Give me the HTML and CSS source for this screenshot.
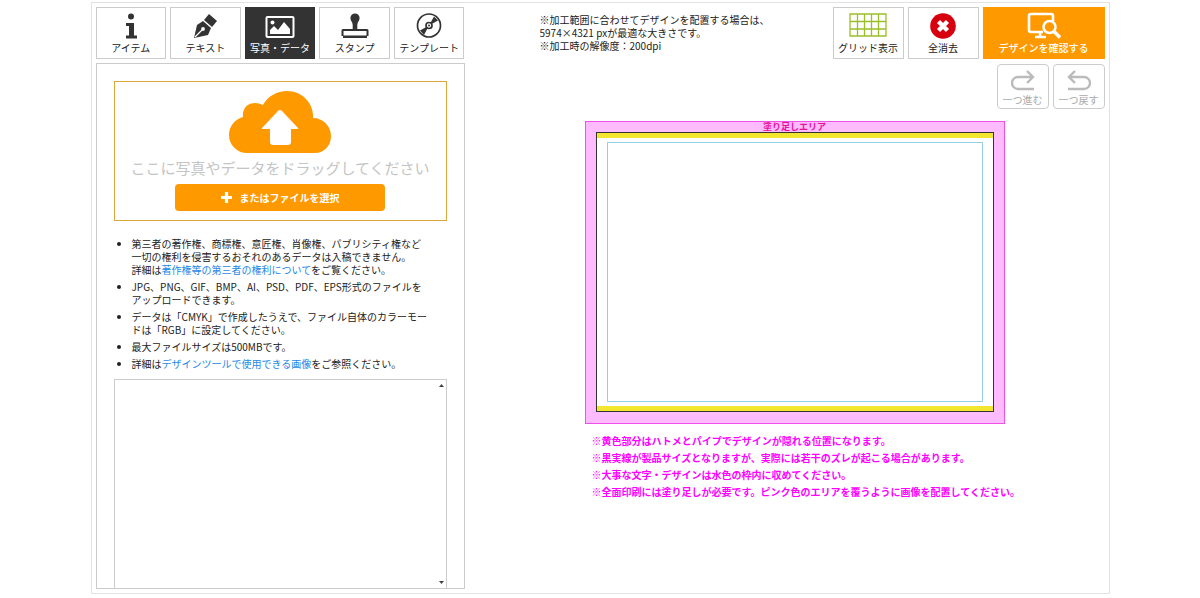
FILE: index.html
```
<!DOCTYPE html>
<html lang="ja">
<head>
<meta charset="utf-8">
<meta name="viewport" content="width=device-width, initial-scale=1">
<title>デザインツール</title>
<link rel="stylesheet" href="styles.css">
</head>
<body>
<div class="frame">
  <section class="sidebar">
    <nav class="tabs">
      <button class="tile" type="button">
        <svg class="icon" width="28" height="28" viewBox="0 0 28 28"><circle cx="14" cy="4.500" r="3" fill="#333"/><path d="M9 11h8v12.500h3v3H9v-3h3V14H9z" fill="#333"/></svg>
        <span>アイテム</span>
      </button>
      <button class="tile" type="button">
        <svg class="icon" width="28" height="28" viewBox="0 0 28 28"><path d="M18 2l8 7-5 6-8-7z" fill="#333"/><path d="M12 9l8 7-3 7L3 26 6 13z" fill="#333"/><path d="M4 25l7-7" stroke="#fff" stroke-width="1.3"/><circle cx="12" cy="17" r="1.9" fill="#fff"/></svg>
        <span>テキスト</span>
      </button>
      <button class="tile tile-active" type="button" aria-pressed="true">
        <svg class="icon" width="30" height="28" viewBox="0 0 30 28"><rect x="1.5" y="5" width="27" height="20" rx="1" fill="none" stroke="#fff" stroke-width="2"/><circle cx="7.500" cy="10.500" r="2" fill="#fff"/><path d="M5 22v-4l4-4 4 4 6-8 6 7v5z" fill="#fff"/></svg>
        <span>写真・データ</span>
      </button>
      <button class="tile" type="button">
        <svg class="icon" width="28" height="28" viewBox="0 0 28 28"><path d="M14 1.500a4.600 4.600 0 0 1 4.600 4.600c0 3-2.300 4-2.300 7V17h9.700q1.500 0 1.500 1.500V24H26v2H2v-2H.5v-5.500Q.5 17 2 17h9.700v-3.900c0-3-2.300-4-2.300-7A4.600 4.600 0 0 1 14 1.500z" fill="#333"/><path d="M2.500 19h23v4.500h-23z" fill="#fff"/></svg>
        <span>スタンプ</span>
      </button>
      <button class="tile" type="button">
        <svg class="icon" width="28" height="28" viewBox="0 0 28 28"><circle cx="14" cy="13.500" r="11.500" fill="none" stroke="#333" stroke-width="1.700"/><path d="M14 13.500L19 4.500 23 8.500zM14 13.500L5 18.500l4 4.500z" fill="#333"/><circle cx="14" cy="13.500" r="3" fill="#fff" stroke="#333" stroke-width="1.700"/><circle cx="14" cy="13.500" r="1" fill="#333"/></svg>
        <span>テンプレート</span>
      </button>
    </nav>

    <div class="panel">
      <div class="dropzone">
        <svg width="102" height="62" viewBox="0 0 102 62"><path d="M18 62A18 18 0 0 1 0 44C0 35 6 28 14 26 13 17 19 12 26 12q4 0 8 2C39 5 48 0 58 0c16 0 27 13 26 27 10 0 18 8 18 18s-7 17-16 17z" fill="#f90"/><path d="M51 19q1 0 2 1l16 17q1 1-1 1h-6v13q0 3-3 3H44q-3 0-3-3V38h-7q-2 0-1-1l16-17q1-1 2-1z" fill="#fff"/></svg>
        <p class="drop-text">ここに写真やデータをドラッグしてください</p>
        <button class="choose" type="button">
          <svg width="11" height="11" viewBox="0 0 11 11"><path d="M5.500 0v11M0 5.500h11" stroke="#fff" stroke-width="3.200"/></svg>
          <span>またはファイルを選択</span>
        </button>
      </div>
      <ul class="guide">
        <li>第三者の著作権、商標権、意匠権、肖像権、パブリシティ権など<br>一切の権利を侵害するおそれのあるデータは入稿できません。<br>詳細は<a href="#rights">著作権等の第三者の権利について</a>をご覧ください。</li>
        <li>JPG、PNG、GIF、BMP、AI、PSD、PDF、EPS形式のファイルを<br>アップロードできます。</li>
        <li>データは「CMYK」で作成したうえで、ファイル自体のカラーモー<br>ドは「RGB」に設定してください。</li>
        <li>最大ファイルサイズは500MBです。</li>
        <li>詳細は<a href="#images">デザインツールで使用できる画像</a>をご参照ください。</li>
      </ul>
      <div class="filelist">
        <svg width="5" height="3" viewBox="0 0 5 3"><path d="M0 3L2.500 0 5 3z" fill="#444"/></svg>
        <svg width="5" height="3" viewBox="0 0 5 3"><path d="M0 0h5L2.500 3z" fill="#444"/></svg>
      </div>
    </div>
  </section>

  <main class="workspace">
    <header class="toolbar">
      <p class="size-note">※加工範囲に合わせてデザインを配置する場合は、<br>5974×4321 pxが最適な大きさです。<br>※加工時の解像度：200dpi</p>
      <div class="actions">
        <button class="tile" type="button">
          <svg class="icon" width="38" height="28" viewBox="0 0 38 28"><path d="M1 2h36v22H1zM1 9.500h36M1 17h36M8.500 2v22M15.500 2v22M22.500 2v22M29.500 2v22" fill="none" stroke="#9abf27" stroke-width="1.300"/></svg>
          <span>グリッド表示</span>
        </button>
        <button class="tile" type="button">
          <svg class="icon" width="28" height="28" viewBox="0 0 28 28"><circle cx="14" cy="14" r="12.800" fill="#d7000f"/><path d="M9.500 9.500l9 9M18.500 9.500l-9 9" stroke="#fff" stroke-width="4.400"/></svg>
          <span>全消去</span>
        </button>
        <button class="tile confirm" type="button">
          <svg class="icon" width="34" height="28" viewBox="0 0 34 28"><path d="M16 20H4q-2 0-2-2V4q0-2 2-2h20q2 0 2 2v5M13 20v5M8 25h11" fill="none" stroke="#fff" stroke-width="2.600"/><circle cx="22.500" cy="15" r="6" fill="#f90" stroke="#fff" stroke-width="2.500"/><path d="M27 19.500l6 6" stroke="#fff" stroke-width="3.600"/></svg>
          <span>デザインを確認する</span>
        </button>
      </div>
    </header>
    <div class="history">
      <button class="step" type="button">
        <svg width="24" height="22" viewBox="0 0 24 22"><path d="M23 19H7A6 6 0 0 1 7 7h15M16 1l6 6-6 6" fill="none" stroke="#bbb" stroke-width="2.400"/></svg>
        <span>一つ進む</span>
      </button>
      <button class="step" type="button">
        <svg width="24" height="22" viewBox="0 0 24 22"><path d="M1 19h16A6 6 0 0 0 17 7H2M8 1L2 7l6 6" fill="none" stroke="#bbb" stroke-width="2.400"/></svg>
        <span>一つ戻す</span>
      </button>
    </div>
    <div class="stage">
      <div class="bleed">
        <span class="bleed-label">塗り足しエリア</span>
        <div class="product"><div class="safe"></div></div>
      </div>
      <div class="cautions">
        <p>※黄色部分はハトメとパイプでデザインが隠れる位置になります。</p>
        <p>※黒実線が製品サイズとなりますが、実際には若干のズレが起こる場合があります。</p>
        <p>※大事な文字・デザインは水色の枠内に収めてください。</p>
        <p>※全面印刷には塗り足しが必要です。ピンク色のエリアを覆うように画像を配置してください。</p>
      </div>
    </div>
  </main>
</div>
</body>
</html>
```
FILE: styles.css
```
* {
  box-sizing: border-box;
}

body {
  margin: 0;
  padding: 2px 16px 4px;
  background: #fff;
  color: #222;
  font-family: "Noto Sans CJK JP", "Noto Sans", sans-serif;
  font-size: 10px;
  line-height: 13px;
}

p,
ul {
  margin: 0;
}

button {
  padding: 0;
  color: inherit;
  font: inherit;
  cursor: pointer;
}

svg {
  display: block;
}

.frame {
  display: grid;
  grid-template-columns: minmax(0, 369fr) minmax(0, 640fr);
  max-width: 1019px;
  min-height: calc(100vh - 6px);
  margin: 0 auto;
  padding: 4px;
  border: 1px solid #e2e2e2;
}

.sidebar {
  display: flex;
  flex-direction: column;
  gap: 4px;
}

.tabs {
  display: grid;
  grid-template-columns: repeat(5, 1fr);
  gap: 4px;
}

.tile {
  display: flex;
  flex-direction: column;
  align-items: center;
  justify-content: space-between;
  height: 52px;
  padding: 4px 0;
  border: 1px solid #ccc;
  background: #fff;
  white-space: nowrap;
}

.tile-active {
  border-color: #333;
  background: #333;
  color: #fff;
}

.panel {
  display: flex;
  flex: 1;
  flex-direction: column;
  padding: 17px 17px 0;
  border: 1px solid #ccc;
}

.dropzone {
  display: flex;
  flex-direction: column;
  align-items: center;
  padding: 9px 0;
  border: 1px solid #dba63a;
}

.drop-text {
  padding: 4px 0 6px;
  color: #c4c4c4;
  font-size: 15px;
  line-height: 21px;
}

.choose {
  display: flex;
  align-items: center;
  justify-content: center;
  gap: 8px;
  width: 210px;
  height: 27px;
  border: 0;
  border-radius: 4px;
  background: #f90;
  color: #fff;
  font-weight: bold;
}

.guide {
  display: grid;
  gap: 4px;
  padding: 16px 0 9px 18px;
  white-space: nowrap;
}

.guide a {
  color: #1e88e5;
  text-decoration: none;
}

.filelist {
  display: flex;
  flex: 1;
  flex-direction: column;
  align-items: flex-end;
  justify-content: space-between;
  padding: 4px 2px;
  border: 1px solid #ccc;
  border-bottom: 0;
}

.workspace {
  display: flex;
  flex-direction: column;
}

.toolbar {
  display: flex;
  justify-content: space-between;
}

.size-note {
  padding: 6px 0 0 75px;
  white-space: nowrap;
}

.actions {
  display: flex;
  gap: 4px;
}

.actions .tile {
  width: 71px;
}

.actions .confirm {
  width: 122px;
  border-color: #f90;
  background: #f90;
  color: #fff;
  font-weight: 500;
}

.history {
  display: flex;
  justify-content: flex-end;
  gap: 4px;
  padding-top: 5px;
}

.step {
  display: flex;
  flex-direction: column;
  align-items: center;
  justify-content: space-between;
  width: 52px;
  height: 45px;
  padding: 5px 0 2px;
  border: 1px solid #ccc;
  border-radius: 4px;
  background: #fff;
  color: #aaa;
}

.stage {
  width: 420px;
  margin: 12px 100px 0 auto;
}

.bleed {
  display: flex;
  flex-direction: column;
  padding: 0 10px 11px;
  border: 1px solid #f050e8;
  background: #fbf;
}

.bleed-label {
  color: #e8109a;
  font-size: 9px;
  font-weight: bold;
  line-height: 10px;
  text-align: center;
}

.product {
  padding: 4px 10px;
  border: 1px solid #333;
  background: linear-gradient(#f2e62e, #f2e62e) top / 100% 5px no-repeat, linear-gradient(#f2e62e, #f2e62e) bottom / 100% 5px no-repeat, #fff;
}

.safe {
  height: 260px;
  margin: 5px 0;
  border: 1px solid #93cfdf;
}

.cautions {
  padding: 8px 0 0 7px;
  color: #f0f;
  font-weight: bold;
  line-height: 17px;
  white-space: nowrap;
}
```
